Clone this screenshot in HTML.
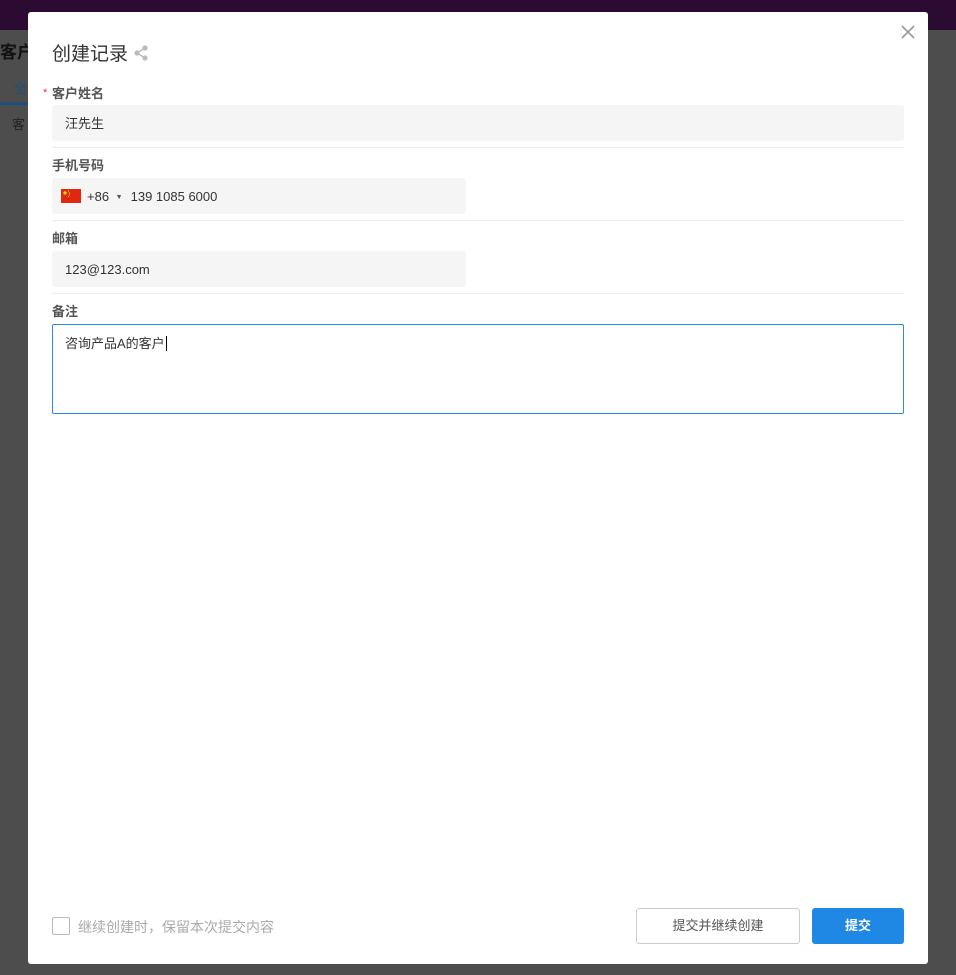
<!DOCTYPE html>
<html><head><meta charset="utf-8"><style>
*{box-sizing:border-box;margin:0;padding:0}
body{width:956px;height:975px;overflow:hidden;background:#4d4d4d;font-family:"Liberation Sans","Noto Sans CJK SC",sans-serif;position:relative}
.top{position:absolute;left:0;top:0;width:956px;height:30px;background:#2c0b32}
.bgt{position:absolute;left:0;top:38px;font-size:17px;color:#111;font-weight:bold}
.modal{position:absolute;left:28px;top:12px;width:900px;height:952px;background:#fff;border-radius:3px}
.title{position:absolute;left:24px;top:27px;font-size:19px;color:#333}
.close{position:absolute;right:12px;top:12px}
.lbl{position:absolute;left:24px;font-size:13px;color:#555;font-weight:bold}
.inp{position:absolute;left:24px;height:36px;background:#f5f5f5;border-radius:3px;font-size:13px;color:#333;padding:0 13px;line-height:38px}
.hr{position:absolute;left:24px;width:852px;height:1px;background:#eee}
.ta{position:absolute;left:24px;top:312px;width:852px;height:90px;border:1px solid #2b8ae5;border-radius:2px;padding:8px 12px;font-size:13px;color:#333}
.btn{position:absolute;top:896px;height:36px;border-radius:3px;font-size:13px;text-align:center;line-height:36px}
</style></head><body>
<div class="top"></div>
<div class="bgt">客户</div>
<div style="position:absolute;left:14px;top:78px;font-size:13px;color:#1d4f7a">全</div>
<div style="position:absolute;left:0;top:102px;width:28px;height:3px;background:#1d4f7a"></div>
<div style="position:absolute;left:12px;top:114px;font-size:13px;color:#222">客</div>
<div class="modal">
<div class="title">创建记录 <svg width="16" height="16" viewBox="0 0 16 16" style="vertical-align:-1px"><circle cx="12" cy="3" r="2.6" fill="#bbb"/><circle cx="4" cy="8" r="2.6" fill="#bbb"/><circle cx="12" cy="13" r="2.6" fill="#bbb"/><path d="M12 3L4 8L12 13" stroke="#bbb" stroke-width="1.5" fill="none"/></svg></div>
<svg class="close" width="16" height="16" viewBox="0 0 16 16"><path d="M2 2L14 14M14 2L2 14" stroke="#999" stroke-width="1.6"/></svg>
<div style="position:absolute;left:15px;top:75px;color:#e33;font-size:11px">*</div>
<div class="lbl" style="top:71px">客户姓名</div>
<div class="inp" style="top:93px;width:852px">汪先生</div>
<div class="hr" style="top:135px"></div>
<div class="lbl" style="top:143px">手机号码</div>
<div class="inp" style="top:166px;width:414px;padding-left:35px"><svg style="position:absolute;left:9px;top:11px" width="20" height="14" viewBox="0 0 20 14"><rect width="20" height="14" fill="#de2910"/><circle cx="4" cy="4" r="1.6" fill="#ffde00"/><circle cx="7.5" cy="2" r=".6" fill="#ffde00"/><circle cx="8.5" cy="4" r=".6" fill="#ffde00"/><circle cx="8.5" cy="6" r=".6" fill="#ffde00"/><circle cx="7.5" cy="7.5" r=".6" fill="#ffde00"/></svg>+86 <span style="font-size:7px;color:#555;margin:0 8px 0 3px;vertical-align:2px">▼</span>139 1085 6000</div>
<div class="hr" style="top:208px"></div>
<div class="lbl" style="top:216px">邮箱</div>
<div class="inp" style="top:239px;width:414px">123@123.com</div>
<div class="hr" style="top:281px"></div>
<div class="lbl" style="top:289px">备注</div>
<div class="ta">咨询产品A的客户<span style="border-left:1px solid #000;margin-left:1px"></span></div>
<div style="position:absolute;left:24px;top:905px;width:18px;height:18px;border:1px solid #bbb;border-radius:2px"></div>
<div style="position:absolute;left:50px;top:905px;font-size:14px;color:#aaa">继续创建时，保留本次提交内容</div>
<div class="btn" style="left:608px;width:164px;border:1px solid #ccc;color:#555;line-height:34px">提交并继续创建</div>
<div class="btn" style="left:784px;width:92px;background:#1f88e5;color:#fff;font-weight:bold">提交</div>
</div>
</body></html>
